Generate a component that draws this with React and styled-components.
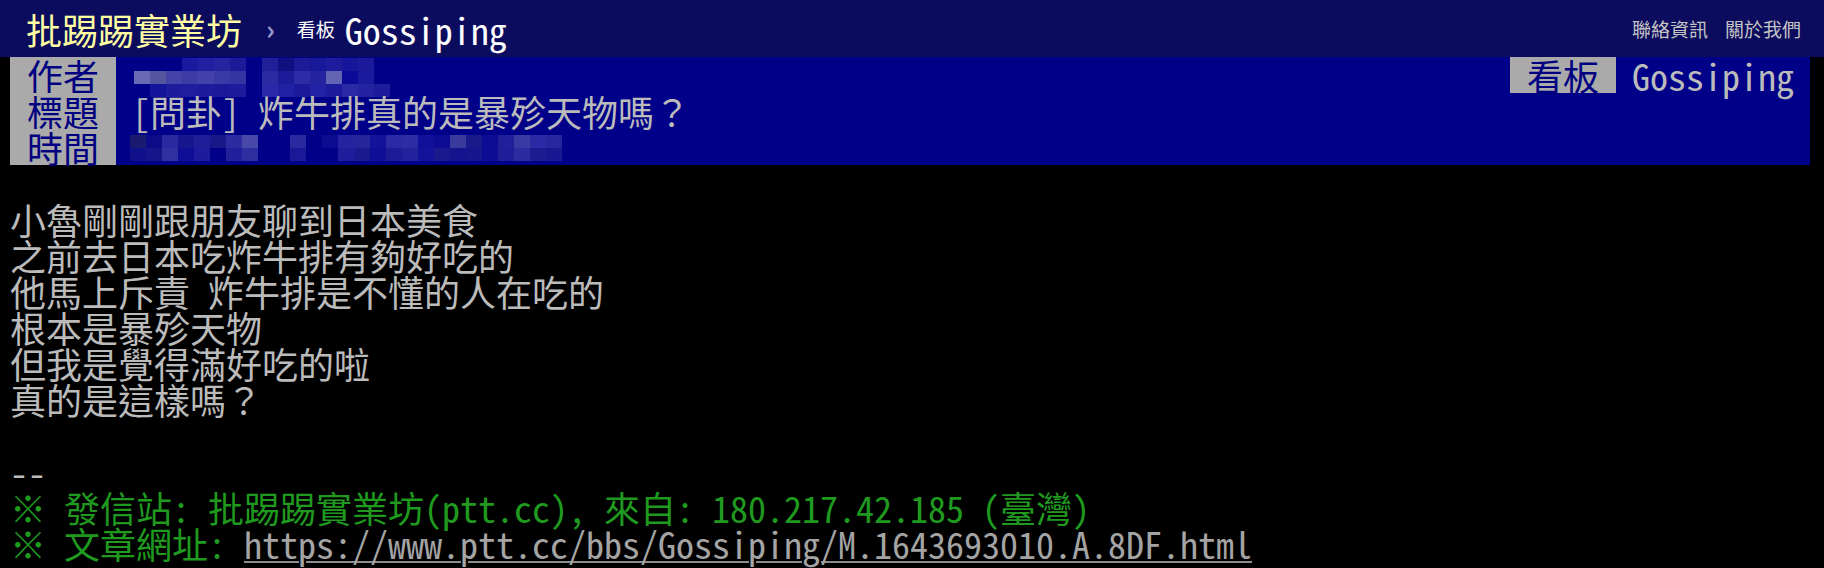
import styled, { createGlobalStyle } from "styled-components";

const MONO = `"Noto Sans Mono CJK TC", "Noto Sans CJK TC", "DejaVu Sans Mono", monospace`;
const SANS = `"Noto Sans CJK TC", "Noto Sans", sans-serif`;

const GlobalStyle = createGlobalStyle`
  html {
    overflow: hidden;
  }

  body {
    margin: 0;
    background: #000000;
    font-family: ${MONO};
    color: #bbbbbb;
  }
`;

const TopBar = styled.div`
  display: flex;
  align-items: center;
  height: 57px;
  padding: 0 23px 0 26px;

  background: #0c0c5e;
`;

const Logo = styled.div`
  font-family: ${SANS};
  font-size: 36px;
  line-height: 40px;
  color: #ffffa2;
`;

const Crumb = styled.div`
  margin-left: 24px;
  font-family: ${SANS};
  font-size: 27px;
  font-weight: bold;
  line-height: 40px;
  color: #9a9acc;
`;

const BoardLabel = styled.div`
  margin-left: 22px;
  font-family: ${SANS};
  font-size: 19px;
  color: #ffffff;
`;

const BoardName = styled.div`
  margin-left: 10px;
  font-size: 36px;
  line-height: 40px;
  color: #ffffff;
`;

const Links = styled.div`
  display: flex;
  gap: 17px;
  margin-left: auto;

  font-family: ${SANS};
  font-size: 19px;
  color: #c4c4c4;
`;

const Main = styled.div`
  min-height: 511px;
  padding: 0 14px 0 10px;
`;

const MetaBox = styled.div`
  background: #000088;
`;

const MetaLine = styled.div`
  display: flex;
  align-items: flex-start;
  height: 36px;

  font-size: 36px;
  line-height: 36px;
`;

const Tag = styled.span`
  padding: 0 17px;
  background: #aaaaaa;
  color: #000080;
  white-space: nowrap;
`;

const Value = styled.span`
  padding: 0 16px;
  color: #bbbbbb;
  white-space: pre;
`;

const Right = styled.div`
  display: flex;
  margin-left: auto;
`;

const Mosaic = styled.div`
  display: grid;
  grid-template-columns: repeat(${(p) => p.$cols}, 16px);
  grid-auto-rows: ${(p) => p.$row}px;
  margin: ${(p) => p.$margin};
`;

const Cell = styled.div`
  background: ${(p) => p.$c || "transparent"};
`;

const Content = styled.div`
  font-size: 36px;
  line-height: 36px;
  white-space: pre;
`;

const Line = styled.div`
  height: 36px;
  color: ${(p) => p.$color || "#bbbbbb"};
`;

const Link = styled.span`
  color: #a4a4a4;
  text-decoration: underline;
  text-decoration-color: #8c8c8c;
  text-decoration-thickness: 2px;
  text-underline-offset: 2px;
`;

const authorPixels = [
  [null, null, null, "#1a1aa0", "#2020a0", "#25259f", "#1c1c98", null, "#202098", "#101080", "#1c1c98", "#18189a", "#1c1c9c", "#16169a", "#1a1a9a", null],
  ["#6a6ab4", "#55559f", "#4444a8", "#3c3ca4", "#4242aa", "#3a3aa6", "#3434a2", null, "#2a2aa2", "#1c1c9a", "#2c2ca6", "#2424a0", "#6464b4", "#0a0a98", "#1a1a9c", null],
  [null, "#14149a", "#1c1c9c", "#1e1e9e", "#1c1c9c", "#1a1a9a", "#1c1c9c", null, "#2a2aa8", "#2020a2", "#1a1a9a", "#2222a4", "#1c1c9c", "#2a2aa6", "#2424a2", "#1c1c9c"],
];

const timePixels = [
  ["#1a1a70", "#0c0c88", "#2a2aa0", "#16168e", "#1e1e98", "#181888", "#2c2ca0", "#4848a8", null, null, "#2a2aa0", null, "#0c0c90", "#2424a0", "#26269c", "#12129a", "#2a2aa4", "#2c2ca4", "#10109a", "#0c0c94", "#3a3a9c", "#1a1a8a", "#0c0c94", "#20209a", "#3a3aa4", "#2a2aa4", "#26269e"],
  ["#10108a", "#16168c", "#3030a0", "#0e0e96", "#1c1c9c", null, "#20209a", "#2e2ea0", null, null, "#1a1a98", null, null, "#1e1e9c", "#1a1a8e", "#0e0e96", "#1c1c96", "#22229c", "#12129a", "#1a1a8e", "#14148e", "#16168e", "#0c0c94", "#1e1e98", "#2c2ca0", "#1c1c90", "#181892"],
];

const Pixels = ({ rows, row, margin }) => (
  <Mosaic $cols={rows[0].length} $row={row} $margin={margin}>
    {rows.flat().map((c, i) => (
      <Cell key={i} $c={c} />
    ))}
  </Mosaic>
);

const body = [
  "",
  "小魯剛剛跟朋友聊到日本美食",
  "之前去日本吃炸牛排有夠好吃的",
  "他馬上斥責 炸牛排是不懂的人在吃的",
  "根本是暴殄天物",
  "但我是覺得滿好吃的啦",
  "真的是這樣嗎？",
  "",
  "--",
];

const App = () => {
  return (
    <>
      <GlobalStyle />
      <TopBar>
        <Logo>批踢踢實業坊</Logo>
        <Crumb>›</Crumb>
        <BoardLabel>看板</BoardLabel>
        <BoardName>Gossiping</BoardName>
        <Links>
          <span>聯絡資訊</span>
          <span>關於我們</span>
        </Links>
      </TopBar>
      <Main>
        <MetaBox>
          <MetaLine>
            <Tag>作者</Tag>
            <Pixels rows={authorPixels} row={13} margin="1px 0 0 18px" />
            <Right>
              <Tag>看板</Tag>
              <Value>Gossiping</Value>
            </Right>
          </MetaLine>
          <MetaLine>
            <Tag>標題</Tag>
            <Value>[問卦] 炸牛排真的是暴殄天物嗎？</Value>
          </MetaLine>
          <MetaLine>
            <Tag>時間</Tag>
            <Pixels rows={timePixels} row={13} margin="6px 0 0 14px" />
          </MetaLine>
        </MetaBox>
        <Content>
          {body.map((t, i) => (
            <Line key={i}>{t}</Line>
          ))}
          <Line $color="#1f9a1f">
            ※ 發信站: 批踢踢實業坊(ptt.cc), 來自: 180.217.42.185 (臺灣)
          </Line>
          <Line $color="#1f9a1f">
            ※ 文章網址:{" "}
            <Link>https://www.ptt.cc/bbs/Gossiping/M.1643693010.A.8DF.html</Link>
          </Line>
        </Content>
      </Main>
    </>
  );
};

export default App;
